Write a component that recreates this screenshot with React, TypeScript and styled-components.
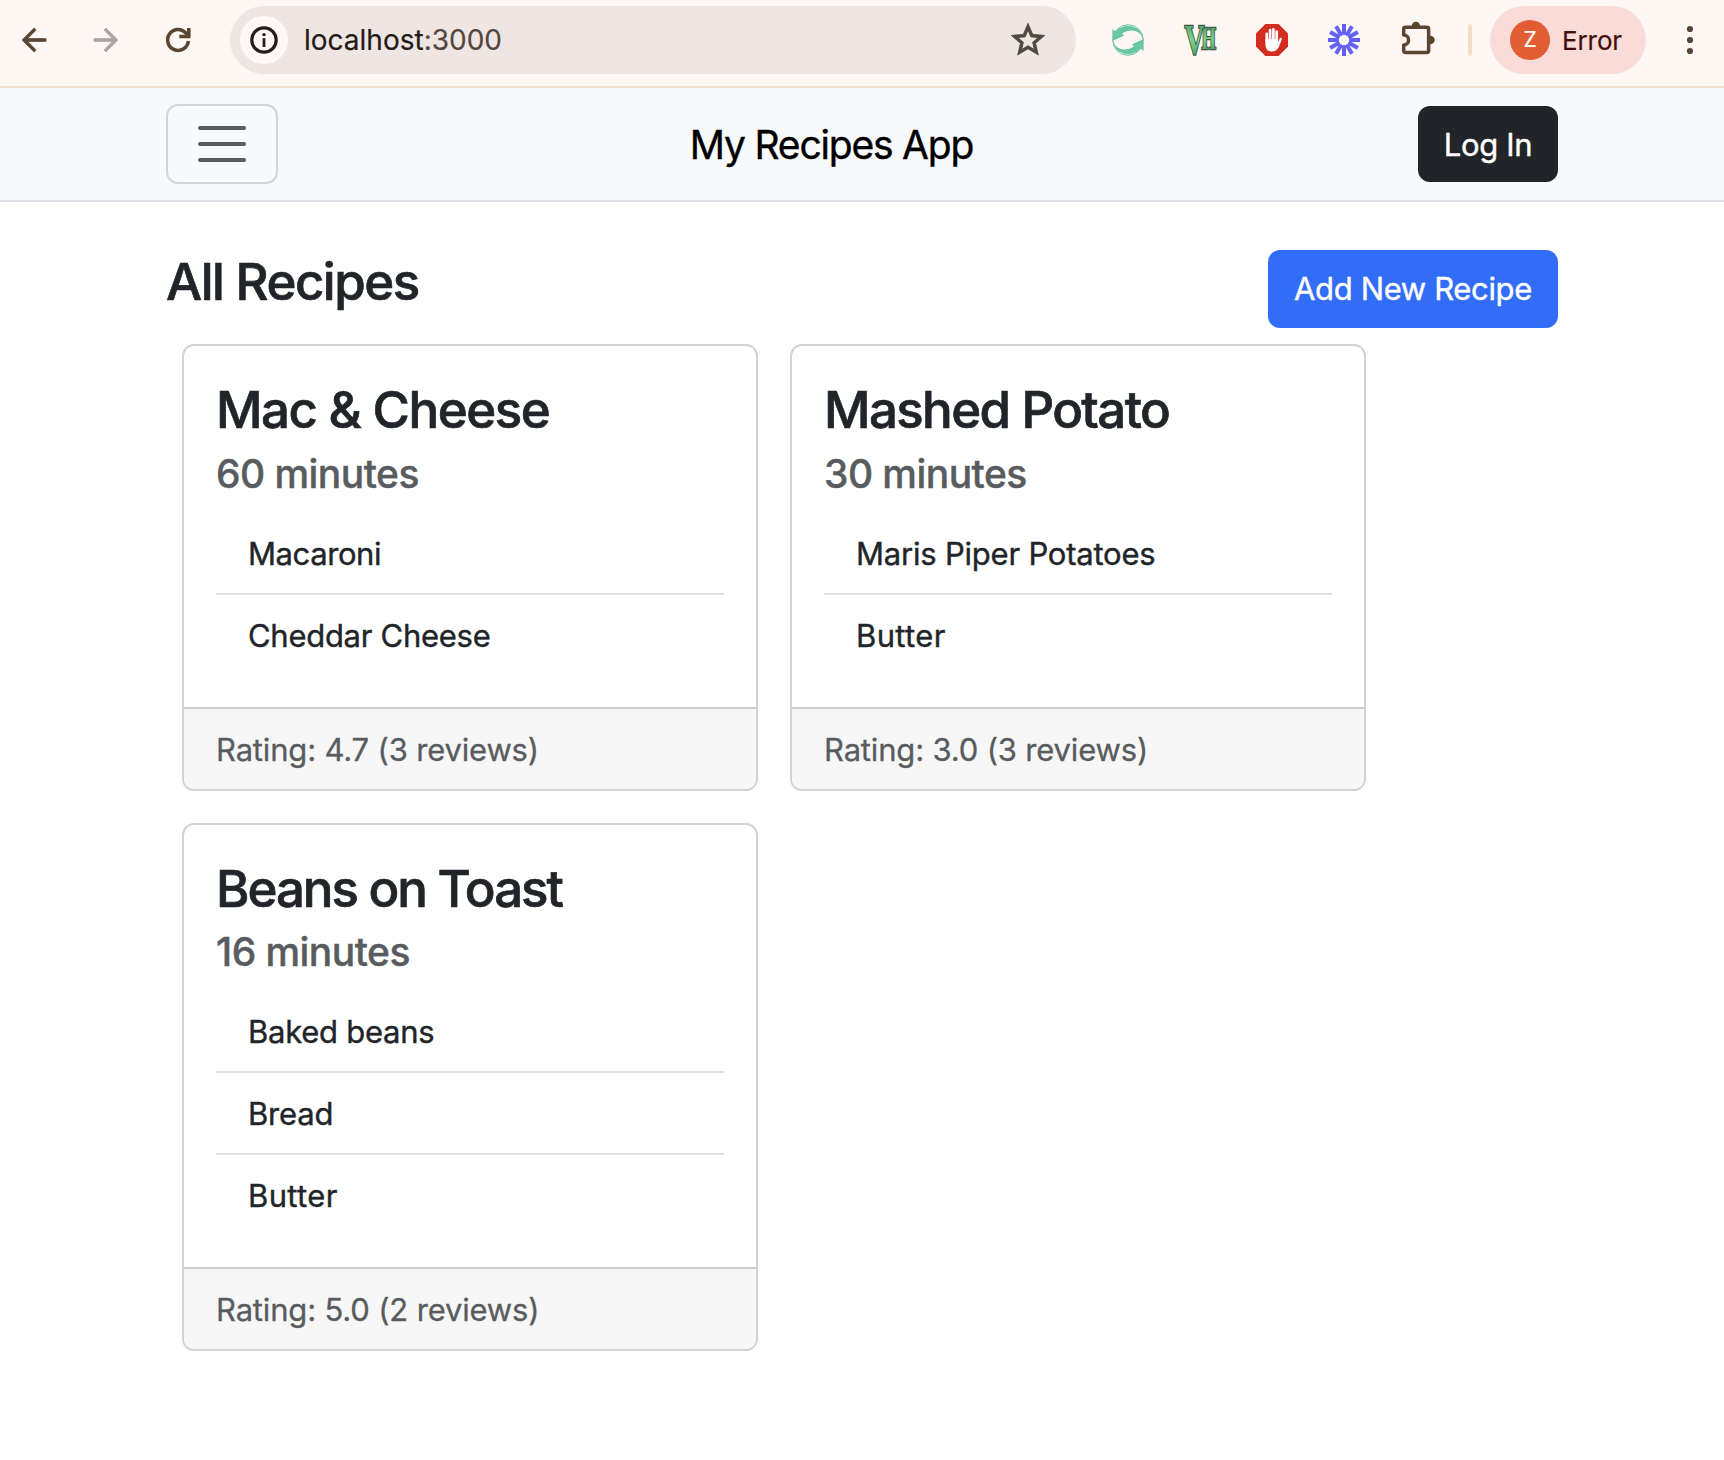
import React from 'react';
import styled, { createGlobalStyle } from 'styled-components';

const ink = '#212529';
const muted = '#595c5f';
const chromeInk = '#5a4531';

const GlobalStyle = createGlobalStyle`
  * { box-sizing: border-box; }
  html, body { margin: 0; padding: 0; background: #fff; }
  body {
    font-family: Inter, Roboto, "Liberation Sans", sans-serif;
    color: ${ink};
    -webkit-text-stroke-width: 0.4px;
  }
  h1, h2, h3, p, ul { margin: 0; padding: 0; }
  button { font: inherit; border: 0; padding: 0; background: none; }
  svg { display: block; flex: none; -webkit-text-stroke-width: 0; }
`;

/* Browser toolbar */

const Toolbar = styled.header`
  display: flex;
  align-items: center;
  height: 88px;
  padding: 0 0 6px 16px;
  background: #fef8f4;
  border-bottom: 2px solid #f1dfd2;
  -webkit-text-stroke-width: 0.2px;
`;

const NavButtons = styled.div`
  display: flex;
  gap: 36px;
`;

const AddressBar = styled.div`
  display: flex;
  align-items: center;
  width: 846px;
  height: 68px;
  margin-left: 34px;
  padding: 0 28px 0 10px;
  border-radius: 34px;
  background: #efe6e3;
`;

const SiteInfo = styled.span`
  display: grid;
  place-items: center;
  width: 48px;
  height: 48px;
  border-radius: 50%;
  background: #fef8f4;
`;

const Url = styled.span`
  flex: 1;
  margin-left: 16px;
  font-size: 28px;
  line-height: 34px;
  color: #231a17;
`;

const Port = styled.span`
  color: #53473f;
`;

const Extensions = styled.div`
  display: flex;
  align-items: center;
  gap: 40px;
  margin: 0 36px;
`;

const Divider = styled.span`
  width: 4px;
  height: 32px;
  margin: 0 18px 0 24px;
  border-radius: 2px;
  background: #f8dcc1;
`;

const Profile = styled.div`
  display: flex;
  align-items: center;
  width: 156px;
  height: 68px;
  margin-right: 40px;
  padding-left: 20px;
  border-radius: 34px;
  background: #f9dcd8;
`;

const ProfileName = styled.span`
  padding-top: 2px;
  font-size: 26px;
  line-height: 32px;
  letter-spacing: -0.1px;
  color: #410e0b;
`;

const Avatar = styled.span`
  display: grid;
  place-items: center;
  width: 40px;
  height: 40px;
  margin-right: 12px;
  border-radius: 50%;
  background: #e25d33;
  color: #fff;
  font-size: 21px;
  line-height: 26px;
`;

const Arrow = ({ color, flip }: { color: string; flip?: boolean }) => (
  <svg width="36" height="36" viewBox="0 0 24 24" fill={color} stroke={color} strokeWidth="0.45">
    <path
      transform={flip ? 'rotate(180 12 12)' : undefined}
      d="M20 11H7.83l5.59-5.59L12 4l-8 8 8 8 1.41-1.41L7.83 13H20v-2z"
    />
  </svg>
);

const ReloadIcon = () => (
  <svg width="36" height="36" viewBox="0 0 36 36" fill="none" stroke={chromeInk} strokeWidth="3.5">
    <path d="M28.4 19A10.4 10.4 0 1 1 25.6 10.8L28.4 13.8" />
    <path d="M28.8 6V14.4H19.3" />
  </svg>
);

const InfoIcon = () => (
  <svg width="32" height="32" viewBox="0 0 32 32" fill="none" stroke="#231c18">
    <circle cx="16" cy="16" r="12.2" strokeWidth="3.2" />
    <path d="M16 14.2V23" strokeWidth="2.8" />
    <circle cx="16" cy="10.6" r="1.7" fill="#231c18" stroke="none" />
  </svg>
);

const StarIcon = () => (
  <svg width="40" height="40" viewBox="0 0 24 24" fill="#50473d" stroke="#50473d" strokeWidth="0.5">
    <path d="M22 9.24l-7.19-.62L12 2 9.19 8.63 2 9.24l5.46 4.73L5.82 21 12 17.27 18.18 21l-1.63-7.03L22 9.24zM12 15.4l-3.76 2.27 1-4.28-3.32-2.88 4.38-.38L12 6.1l1.71 4.04 4.38.38-3.32 2.88 1 4.28L12 15.4z" />
  </svg>
);

const crescent =
  'M0.4 5L3.6 7.6A16 16 0 0 1 31.8 16.4L30.7 14.8C29.8 10.2 25.2 6.6 20 6.6C16.2 6.6 12.8 7.6 10 9.8L12.4 11.4L6 14.4L0.4 17Z';

const SyncIcon = () => (
  <svg width="32" height="32" viewBox="0 0 32 32" fill="#69c7a0">
    <path d={crescent} />
    <path d={crescent} transform="rotate(180 16 16)" />
    <circle cx="16" cy="16" r="15.3" fill="none" stroke="#69c7a0" strokeWidth="1" />
  </svg>
);

const VhLogo = () => (
  <svg width="32" height="32" viewBox="0 0 32 32" overflow="visible">
    <defs>
      <linearGradient id="vh" x1="0" y1="0" x2="0" y2="1">
        <stop offset="0" stopColor="#3a9657" />
        <stop offset="0.5" stopColor="#7dd48c" />
        <stop offset="1" stopColor="#2f8b4e" />
      </linearGradient>
    </defs>
    <g
      fill="url(#vh)"
      stroke="#474d47"
      strokeWidth="2.4"
      paintOrder="stroke"
      fontFamily="Liberation Serif, serif"
      fontWeight="700"
    >
      <text transform="translate(17.4 25.4) scale(0.6 1)" fontSize="31">H</text>
      <text transform="translate(0.4 30) scale(0.66 1)" fontSize="42">V</text>
    </g>
  </svg>
);

const HandIcon = () => (
  <svg width="32" height="32" viewBox="0 0 32 32">
    <path d="M9.4 0H22.6L32 9.4V22.6L22.6 32H9.4L0 22.6V9.4Z" fill="#d32d20" />
    <g stroke="#fff" strokeWidth="2.7" strokeLinecap="round">
      <path d="M10.8 9.8V18M14.1 6.2V16M17.4 5.4V16M20.7 7.6V18" />
    </g>
    <path
      d="M9.45 15H22.05V18.6L23.6 14.8C24.2 13.2 26.2 13.8 25.7 15.4L22.9 22.8C21.6 26 19.4 27.6 16 27.6C11.6 27.6 9.45 24.6 9.45 20Z"
      fill="#fff"
    />
  </svg>
);

const rays = Array.from({ length: 12 }, (_, i) => i * 30);

const BurstIcon = () => (
  <svg width="32" height="32" viewBox="0 0 32 32" stroke="#6461f4" fill="none">
    {rays.map(angle => (
      <path key={angle} d="M16 0V10" strokeWidth="4" transform={`rotate(${angle} 16 16)`} />
    ))}
    <circle cx="16" cy="16" r="6.6" strokeWidth="2.8" />
  </svg>
);

const PuzzleIcon = () => (
  <svg width="48" height="48" viewBox="0 0 48 48">
    <path
      d="M9.4 11.2H30.9A1.7 1.7 0 0 1 32.6 12.9V34.8A1.7 1.7 0 0 1 30.9 36.5H9.4A1.7 1.7 0 0 1 7.7 34.8V28.9A4.9 4.9 0 0 0 7.7 19.1V12.9A1.7 1.7 0 0 1 9.4 11.2Z"
      fill="none"
      stroke={chromeInk}
      strokeWidth="3.5"
      strokeLinejoin="round"
    />
    <path d="M15.7 10.4A4.2 4.7 0 0 1 24.1 10.4Z M34 19.8A4.8 4.2 0 0 1 34 28.2Z" fill={chromeInk} />
  </svg>
);

const MenuDots = () => (
  <svg width="8" height="32" viewBox="0 0 8 32" fill={chromeInk}>
    <circle cx="4" cy="5" r="3.1" />
    <circle cx="4" cy="16" r="3.1" />
    <circle cx="4" cy="27" r="3.1" />
  </svg>
);

/* App navigation bar */

const Navbar = styled.nav`
  display: flex;
  align-items: center;
  justify-content: space-between;
  height: 114px;
  padding: 0 166px;
  background: #f8f9fb;
  border-bottom: 2px solid #dee1e5;
`;

const Toggler = styled.button`
  display: grid;
  place-items: center;
  width: 112px;
  height: 80px;
  border: 2px solid #d3d4d6;
  border-radius: 12px;
`;

const Brand = styled.span`
  padding: 1px 33px 0 0;
  font-size: 39px;
  line-height: 47px;
  letter-spacing: -1.2px;
  color: #000;
`;

const Button = styled.button<{ $bg: string; $width: number; $height: number; $tracking?: number }>`
  width: ${p => p.$width}px;
  height: ${p => p.$height}px;
  border-radius: 12px;
  background: ${p => p.$bg};
  color: #fff;
  font-size: 31px;
  line-height: 38px;
  letter-spacing: ${p => p.$tracking ?? 0}px;
`;

const LogInButton = styled(Button)`
  padding-top: 2px;
`;

/* Recipe list */

const Main = styled.main`
  padding: 48px 166px 0;
`;

const PageHeader = styled.div`
  display: flex;
  justify-content: space-between;
  align-items: flex-start;
  margin-bottom: 16px;
`;

const Heading = styled.h1`
  font-size: 51px;
  font-weight: 500;
  line-height: 63px;
  letter-spacing: -1.48px;
  -webkit-text-stroke-width: 0.7px;
`;

const Grid = styled.div`
  display: grid;
  grid-template-columns: 576px 576px;
  gap: 32px;
  padding-left: 16px;
`;

const Card = styled.article`
  border: 2px solid #d2d2d2;
  border-radius: 12px;
  overflow: hidden;
  background: #fff;
`;

const CardBody = styled.div`
  padding: 32px;
`;

const CardTitle = styled.h2<{ $tracking: number }>`
  font-size: 51px;
  font-weight: 500;
  line-height: 63px;
  letter-spacing: ${p => p.$tracking}px;
  -webkit-text-stroke-width: 0.7px;
`;

const CardSubtitle = styled.h3`
  margin: 8.6px 0 16px;
  font-size: 39px;
  font-weight: 500;
  line-height: 47px;
  letter-spacing: -0.55px;
  color: ${muted};
`;

const Ingredients = styled.ul`
  list-style: none;
`;

const Ingredient = styled.li<{ $tracking: number }>`
  padding: 16px 32px 15px;
  font-size: 31px;
  line-height: 49px;
  letter-spacing: ${p => p.$tracking}px;

  & + & {
    border-top: 2px solid #dee2e6;
  }
`;

const CardFooter = styled.footer`
  padding: 16px 32px 15px;
  border-top: 2px solid #cbcbcb;
  background: #f7f7f7;
  font-size: 31px;
  line-height: 49px;
  letter-spacing: -0.17px;
  color: ${muted};
  -webkit-text-stroke-width: 0.3px;
`;

type Item = { name: string; tracking: number };
type Recipe = { title: string; tracking: number; minutes: number; ingredients: Item[]; rating: string; reviews: number };

const recipes: Recipe[] = [
  {
    title: 'Mac & Cheese',
    tracking: -1.48,
    minutes: 60,
    ingredients: [
      { name: 'Macaroni', tracking: -0.42 },
      { name: 'Cheddar Cheese', tracking: -0.28 },
    ],
    rating: '4.7',
    reviews: 3,
  },
  {
    title: 'Mashed Potato',
    tracking: -1.62,
    minutes: 30,
    ingredients: [
      { name: 'Maris Piper Potatoes', tracking: -0.21 },
      { name: 'Butter', tracking: 0.35 },
    ],
    rating: '3.0',
    reviews: 3,
  },
  {
    title: 'Beans on Toast',
    tracking: -2.02,
    minutes: 16,
    ingredients: [
      { name: 'Baked beans', tracking: -0.26 },
      { name: 'Bread', tracking: -0.2 },
      { name: 'Butter', tracking: 0.35 },
    ],
    rating: '5.0',
    reviews: 2,
  },
];

const RecipeCard = ({ recipe }: { recipe: Recipe }) => (
  <Card>
    <CardBody>
      <CardTitle $tracking={recipe.tracking}>{recipe.title}</CardTitle>
      <CardSubtitle>{`${recipe.minutes} minutes`}</CardSubtitle>
      <Ingredients>
        {recipe.ingredients.map(item => (
          <Ingredient key={item.name} $tracking={item.tracking}>
            {item.name}
          </Ingredient>
        ))}
      </Ingredients>
    </CardBody>
    <CardFooter>{`Rating: ${recipe.rating} (${recipe.reviews} reviews)`}</CardFooter>
  </Card>
);

export default function App() {
  return (
    <>
      <GlobalStyle />
      <Toolbar>
        <NavButtons>
          <Arrow color={chromeInk} />
          <Arrow color="#aca49f" flip />
          <ReloadIcon />
        </NavButtons>
        <AddressBar>
          <SiteInfo>
            <InfoIcon />
          </SiteInfo>
          <Url>
            localhost<Port>:3000</Port>
          </Url>
          <StarIcon />
        </AddressBar>
        <Extensions>
          <SyncIcon />
          <VhLogo />
          <HandIcon />
          <BurstIcon />
        </Extensions>
        <PuzzleIcon />
        <Divider />
        <Profile>
          <Avatar>Z</Avatar>
          <ProfileName>Error</ProfileName>
        </Profile>
        <MenuDots />
      </Toolbar>
      <Navbar>
        <Toggler aria-label="Toggle navigation">
          <svg width="60" height="60" viewBox="0 0 30 30">
            <path d="M4 7h22M4 15h22M4 23h22" stroke="#595a5d" strokeWidth="2" strokeLinecap="round" />
          </svg>
        </Toggler>
        <Brand>My Recipes App</Brand>
        <LogInButton $bg={ink} $width={140} $height={76} $tracking={-0.3}>
          Log In
        </LogInButton>
      </Navbar>
      <Main>
        <PageHeader>
          <Heading>All Recipes</Heading>
          <Button $bg="#316df6" $width={290} $height={78} $tracking={-0.35}>
            Add New Recipe
          </Button>
        </PageHeader>
        <Grid>
          {recipes.map(recipe => (
            <RecipeCard key={recipe.title} recipe={recipe} />
          ))}
        </Grid>
      </Main>
    </>
  );
}
